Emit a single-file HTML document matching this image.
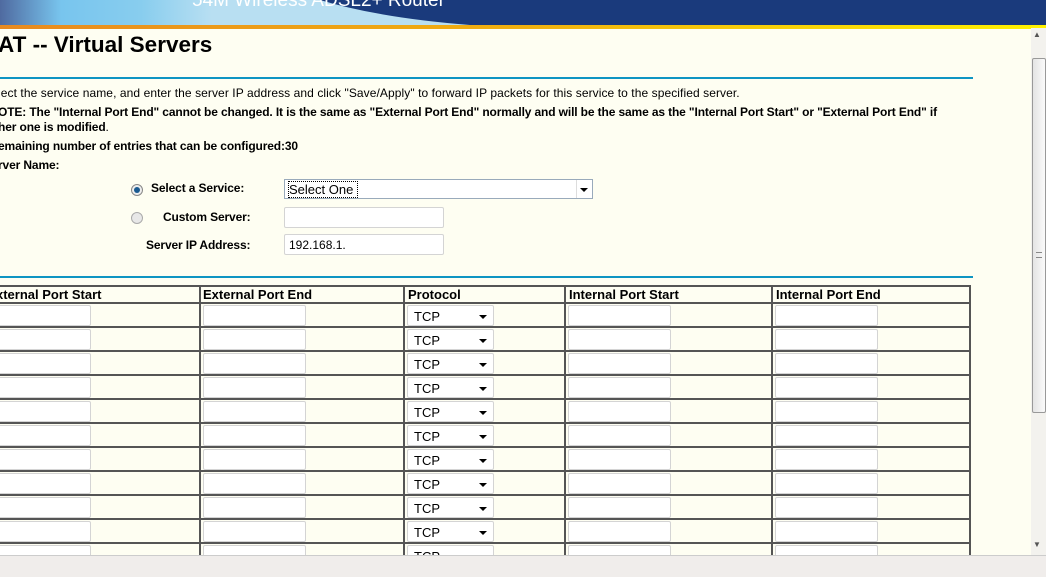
<!DOCTYPE html>
<html><head><style>
*{margin:0;padding:0;box-sizing:border-box}
body{width:1046px;height:577px;overflow:hidden;background:#fefef2;font-family:"Liberation Sans",Arial,sans-serif;position:relative}
.a{position:absolute;white-space:nowrap}
.b{font-weight:bold;font-size:12px;color:#000;letter-spacing:-0.13px}
.t{font-size:12px;color:#000;letter-spacing:0.08px}
.in{position:absolute;height:21px;background:#fff;border:1px solid #d4d4d4;border-radius:2px}
.sel{position:absolute;height:21px;width:87px;background:#fff;border:1px solid #d4d4d4;border-radius:2px;font-size:13px;padding:3px 0 0 6px}
.sel:after{content:"";position:absolute;right:6px;top:9px;border-left:4px solid transparent;border-right:4px solid transparent;border-top:4px solid #000}
.hl{position:absolute;left:0;width:970px;height:2px;background:#555}
.vl{position:absolute;top:285px;height:270px;width:2px;background:#555}
.th{position:absolute;top:287px;font-weight:bold;font-size:13px}
</style></head><body>
<svg class="a" style="left:0;top:0" width="1046" height="30">
<defs>
<linearGradient id="g" x1="0" x2="1"><stop offset="0" stop-color="#4f6aa0"/><stop offset="0.13" stop-color="#78c5ee"/><stop offset="0.3" stop-color="#88cdee"/><stop offset="0.45" stop-color="#b8dff2"/></linearGradient>
<linearGradient id="o" x1="0" x2="1"><stop offset="0" stop-color="#e88a20"/><stop offset="0.5" stop-color="#f0b010"/><stop offset="1" stop-color="#fff200"/></linearGradient>
</defs>
<rect width="1046" height="25" fill="#1a3a7c"/>
<path d="M0 0H320 Q380 18 470 25 H0Z" fill="url(#g)"/>
<rect y="25" width="1046" height="4" fill="url(#o)"/>
<text x="192" y="6" fill="#fff" font-size="19" font-family="Liberation Sans">54M Wireless ADSL2+ Router</text>
</svg>
<div class="a" style="left:-2px;top:32px;font-size:22.5px;font-weight:bold">AT -- Virtual Servers</div>
<div class="a" style="left:0;top:77px;width:973px;height:2px;background:#0e95c3"></div>
<div class="a t" style="left:-2px;top:86px">lect the service name, and enter the server IP address and click "Save/Apply" to forward IP packets for this service to the specified server.</div>
<div class="a b" style="left:-2px;top:105px">OTE: The "Internal Port End" cannot be changed. It is the same as "External Port End" normally and will be the same as the "Internal Port Start" or "External Port End" if</div>
<div class="a b" style="left:-2px;top:120px">her one is modified<span style="font-weight:normal">.</span></div>
<div class="a b" style="left:-2px;top:139px">emaining number of entries that can be configured:30</div>
<div class="a b" style="left:-2px;top:158px">rver Name:</div>
<div class="a" style="left:131px;top:184px;width:12px;height:12px;border-radius:50%;border:1px solid #888;background:#eee"><div style="margin:2px;width:6px;height:6px;border-radius:50%;background:#1a5a90"></div></div>
<div class="a b" style="left:151px;top:181px">Select a Service:</div>
<div class="a" style="left:284px;top:179px;width:309px;height:20px;border:1px solid #9ab;background:#fff;font-size:13px;padding:2px 0 0 4px"><span style="outline:1px dotted #000">Select One&nbsp;</span><span style="position:absolute;right:0;top:0;width:16px;height:18px;border-left:1px solid #ddd"></span><span style="position:absolute;right:4px;top:8px;border-left:4px solid transparent;border-right:4px solid transparent;border-top:4px solid #000"></span></div>
<div class="a" style="left:131px;top:212px;width:12px;height:12px;border-radius:50%;border:1px solid #aaa;background:#e8e8e8"></div>
<div class="a b" style="left:163px;top:210px">Custom Server:</div>
<div class="in" style="left:284px;top:207px;width:160px"></div>
<div class="a b" style="left:146px;top:238px">Server IP Address:</div>
<div class="in" style="left:284px;top:234px;width:160px;font-size:12px;padding:3px 0 0 4px">192.168.1.</div>
<div class="a" style="left:0;top:276px;width:973px;height:2px;background:#0e95c3"></div>
<div class="hl" style="top:285px"></div>
<div class="vl" style="left:199px"></div><div class="vl" style="left:403px"></div><div class="vl" style="left:564px"></div><div class="vl" style="left:771px"></div><div class="vl" style="left:969px"></div>
<div class="th" style="left:-4px">xternal Port Start</div>
<div class="th" style="left:203px">External Port End</div>
<div class="th" style="left:408px">Protocol</div>
<div class="th" style="left:569px">Internal Port Start</div>
<div class="th" style="left:776px">Internal Port End</div>
<div class="hl" style="top:302px"></div>
<div class="hl" style="top:326px"></div><div class="hl" style="top:350px"></div><div class="hl" style="top:374px"></div><div class="hl" style="top:398px"></div><div class="hl" style="top:422px"></div><div class="hl" style="top:446px"></div><div class="hl" style="top:470px"></div><div class="hl" style="top:494px"></div><div class="hl" style="top:518px"></div><div class="hl" style="top:542px"></div>
<div class="in" style="left:-12px;top:305px;width:103px"></div><div class="in" style="left:203px;top:305px;width:103px"></div><div class="sel" style="left:407px;top:305px">TCP</div><div class="in" style="left:568px;top:305px;width:103px"></div><div class="in" style="left:775px;top:305px;width:103px"></div>
<div class="in" style="left:-12px;top:329px;width:103px"></div><div class="in" style="left:203px;top:329px;width:103px"></div><div class="sel" style="left:407px;top:329px">TCP</div><div class="in" style="left:568px;top:329px;width:103px"></div><div class="in" style="left:775px;top:329px;width:103px"></div>
<div class="in" style="left:-12px;top:353px;width:103px"></div><div class="in" style="left:203px;top:353px;width:103px"></div><div class="sel" style="left:407px;top:353px">TCP</div><div class="in" style="left:568px;top:353px;width:103px"></div><div class="in" style="left:775px;top:353px;width:103px"></div>
<div class="in" style="left:-12px;top:377px;width:103px"></div><div class="in" style="left:203px;top:377px;width:103px"></div><div class="sel" style="left:407px;top:377px">TCP</div><div class="in" style="left:568px;top:377px;width:103px"></div><div class="in" style="left:775px;top:377px;width:103px"></div>
<div class="in" style="left:-12px;top:401px;width:103px"></div><div class="in" style="left:203px;top:401px;width:103px"></div><div class="sel" style="left:407px;top:401px">TCP</div><div class="in" style="left:568px;top:401px;width:103px"></div><div class="in" style="left:775px;top:401px;width:103px"></div>
<div class="in" style="left:-12px;top:425px;width:103px"></div><div class="in" style="left:203px;top:425px;width:103px"></div><div class="sel" style="left:407px;top:425px">TCP</div><div class="in" style="left:568px;top:425px;width:103px"></div><div class="in" style="left:775px;top:425px;width:103px"></div>
<div class="in" style="left:-12px;top:449px;width:103px"></div><div class="in" style="left:203px;top:449px;width:103px"></div><div class="sel" style="left:407px;top:449px">TCP</div><div class="in" style="left:568px;top:449px;width:103px"></div><div class="in" style="left:775px;top:449px;width:103px"></div>
<div class="in" style="left:-12px;top:473px;width:103px"></div><div class="in" style="left:203px;top:473px;width:103px"></div><div class="sel" style="left:407px;top:473px">TCP</div><div class="in" style="left:568px;top:473px;width:103px"></div><div class="in" style="left:775px;top:473px;width:103px"></div>
<div class="in" style="left:-12px;top:497px;width:103px"></div><div class="in" style="left:203px;top:497px;width:103px"></div><div class="sel" style="left:407px;top:497px">TCP</div><div class="in" style="left:568px;top:497px;width:103px"></div><div class="in" style="left:775px;top:497px;width:103px"></div>
<div class="in" style="left:-12px;top:521px;width:103px"></div><div class="in" style="left:203px;top:521px;width:103px"></div><div class="sel" style="left:407px;top:521px">TCP</div><div class="in" style="left:568px;top:521px;width:103px"></div><div class="in" style="left:775px;top:521px;width:103px"></div>
<div class="in" style="left:-12px;top:545px;width:103px"></div><div class="in" style="left:203px;top:545px;width:103px"></div><div class="sel" style="left:407px;top:545px">TCP</div><div class="in" style="left:568px;top:545px;width:103px"></div><div class="in" style="left:775px;top:545px;width:103px"></div>
<div class="a" style="left:1031px;top:28px;width:15px;height:527px;background:#f3f2ee"></div>
<div class="a" style="left:1033px;top:30px;font-size:8px;color:#555">▲</div>
<div class="a" style="left:1032px;top:58px;width:14px;height:355px;border:1px solid #999;border-radius:2px;background:linear-gradient(90deg,#e4e4e4,#fafafa)"></div>
<div class="a" style="left:1036px;top:252px;width:6px;height:6px;border-top:1px solid #888;border-bottom:1px solid #888"></div>
<div class="a" style="left:1033px;top:540px;font-size:8px;color:#555">▼</div>
<div class="a" style="left:0;top:555px;width:1046px;height:22px;background:#f0edeb;border-top:1px solid #ccc"></div>
</body></html>
